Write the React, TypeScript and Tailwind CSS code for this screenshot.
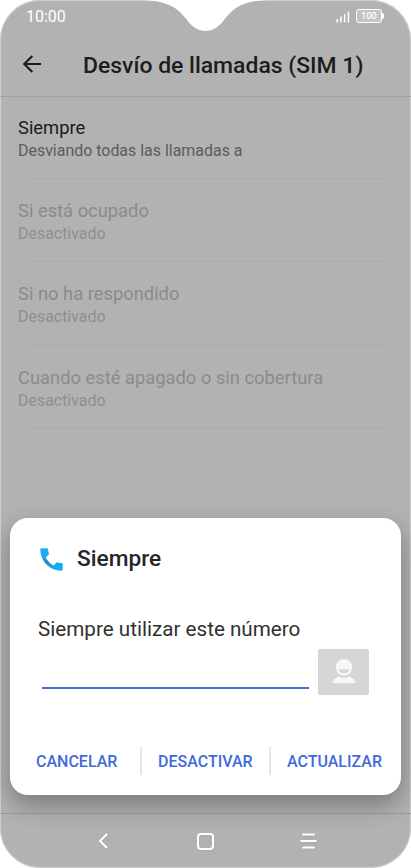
import React from 'react'

interface ForwardingOption {
  title: string
  status: string
  enabled: boolean
}

const options: ForwardingOption[] = [
  { title: 'Siempre', status: 'Desviando todas las llamadas a', enabled: true },
  { title: 'Si está ocupado', status: 'Desactivado', enabled: false },
  { title: 'Si no ha respondido', status: 'Desactivado', enabled: false },
  { title: 'Cuando esté apagado o sin cobertura', status: 'Desactivado', enabled: false },
]

const StatusBar: React.FC = () => (
  <div className="flex h-8 items-start justify-between pl-[26px] pr-[27px] text-white">
    <span className="pt-[7px] text-base leading-5">10:00</span>
    <div className="flex items-start gap-[6px] pt-[9px]">
      <svg width="14" height="14" viewBox="0 0 14 14" stroke="white" strokeWidth="1.5">
        <path d="M1.2 13.5V10M4.9 13.5V7.5M8.6 13.5V5M12.4 13.5V2.500" />
      </svg>
      <div className="flex items-center">
        <div className="flex h-[14px] w-[26px] items-center justify-center rounded-[3px] border border-white bg-[#c4c4c4] text-[9px] font-medium leading-none">
          100
        </div>
        <div className="h-[6px] w-[2px] rounded-r-sm bg-white" />
      </div>
    </div>
  </div>
)

const Header: React.FC = () => (
  <div className="flex h-[65px] items-center border-b border-[#a2a2a2] pl-[22px]">
    <svg width="20" height="18" viewBox="0 0 20 18" fill="none" stroke="#1c1c1c" strokeWidth="2.2">
      <path d="M19 9H2.4M10.3 1L2.3 9l8 8" />
    </svg>
    <h1 className="pl-[41px] pt-[3px] text-[22.95px] font-medium leading-8 text-[#1c1c1c]">Desvío de llamadas (SIM 1)</h1>
  </div>
)

const OptionRow: React.FC<{ option: ForwardingOption }> = ({ option }) => (
  <li className="h-[83.4px] pt-[18.6px]">
    <p className={`pl-[18px] text-[18.35px] leading-6 ${option.enabled ? 'text-[#1c1c1c]' : 'text-[#8b8b8b]'}`}>
      {option.title}
    </p>
    <p className={`pl-[18px] text-[15.95px] leading-[22px] ${option.enabled ? 'text-[#5c5c5c]' : 'text-[#8f8f8f]'}`}>
      {option.status}
    </p>
    <div className="ml-7 mr-[27px] mt-[16.500px] h-px bg-[#ababab]" />
  </li>
)

const PhoneIcon: React.FC = () => (
  <svg width="23" height="23" viewBox="0 0 23 23">
    <defs>
      <linearGradient id="handset" x1="0" y1="0" x2="1" y2="1">
        <stop offset="0" stopColor="#1fb2f5" />
        <stop offset="0.3" stopColor="#1ba9ec" />
        <stop offset="0.42" stopColor="#2387bd" />
        <stop offset="0.6" stopColor="#1c9cda" />
        <stop offset="0.75" stopColor="#12abf3" />
        <stop offset="1" stopColor="#12abf3" />
      </linearGradient>
    </defs>
    <path
      fill="url(#handset)"
      d="M1.4.3H6.9Q8 .3 8.1 1.4 8.2 3.4 8.9 5.4 9.1 6.1 8.5 6.8L5.7 9.6Q8.3 14.8 13.6 17.5L16.3 14.8Q16.9 14.2 17.6 14.4 19.5 15 21.6 15.1 22.7 15.2 22.7 16.2V21.5Q22.7 22.7 21.5 22.7C9.8 22.7.3 13.2.3 1.5Q.3.3 1.4.3Z"
    />
  </svg>
)

const ContactIcon: React.FC = () => (
  <svg width="24" height="26" viewBox="0 0 24 26" fill="#f7f7f7">
    <path d="M.5 24.200c.3-3.200 2.700-5.900 6.500-6.700 3 1.600 7 1.600 10 0 3.800.8 6.200 3.500 6.500 6.700z" />
    <circle cx="12" cy="8.300" r="8.300" />
    <path d="M6.200 10.200h11.600c-.5 2.700-2.900 4-5.800 4s-5.300-1.300-5.800-4z" fill="#d5d7d6" />
  </svg>
)

const Dialog: React.FC = () => (
  <div className="absolute left-[10px] top-[518px] flex h-[277px] w-[391px] flex-col rounded-[18px] bg-white shadow-[0_10px_24px_rgba(0,0,0,0.32)]">
    <div className="flex items-center gap-[14px] pl-[30px] pt-[25px]">
      <PhoneIcon />
      <h2 className="text-[22.7px] font-medium leading-8 text-[#262626]">Siempre</h2>
    </div>
    <p className="pl-[28px] pt-[40px] text-[20.65px] leading-7 text-[#303030]">Siempre utilizar este número</p>
    <div className="flex items-end pl-[32px] pt-[6px]">
      <div className="mb-[6px] h-[39px] w-[267px] border-b-2 border-[#4b70cf]" />
      <div className="ml-[9px] flex h-[46px] w-[51px] items-center justify-center rounded-[2px] bg-[#d5d7d6]">
        <ContactIcon />
      </div>
    </div>
    <div className="mt-[52px] flex h-[28px] items-center text-[16px] font-medium text-[#4169dc]">
      <button className="w-[130px] pl-[26px] pt-[2px] text-left">CANCELAR</button>
      <div className="h-[28px] w-[2px] bg-[#e6e6e6]" />
      <button className="w-[127px] pl-[16px] pt-[2px] text-left">DESACTIVAR</button>
      <div className="h-[28px] w-[2px] bg-[#e6e6e6]" />
      <button className="pl-[16px] pt-[2px] text-left">ACTUALIZAR</button>
    </div>
  </div>
)

const NavBar: React.FC = () => (
  <div className="mt-auto flex h-[55px] items-center border-t border-[#8d8d8d]/60">
    <svg width="10" height="16" viewBox="0 0 10 16" className="ml-[98px] drop-shadow-xs" fill="none" stroke="white" strokeWidth="2">
      <path d="M9 1L2 8l7 7" />
    </svg>
    <div className="ml-[89px] h-[17px] w-[17px] rounded-[4px] border-2 border-white drop-shadow-xs" />
    <svg width="17" height="16" viewBox="0 0 17 16" className="ml-[86px] drop-shadow-xs" stroke="white" strokeWidth="2" strokeLinecap="round">
      <path d="M3 1.500h11M1.200 8h14.600M3 14.500h11" />
    </svg>
  </div>
)

export default function App() {
  return (
    <div className="h-[868px] w-[411px] overflow-hidden bg-white font-['Roboto',sans-serif]">
      <div className="relative flex h-[868px] flex-col overflow-hidden rounded-[40px] bg-[#b2b2b2] shadow-[inset_0_0_0_1px_#cfcfcf]">
        <StatusBar />
        <Header />
        <ul>
          {options.map((option) => (
            <OptionRow key={option.title} option={option} />
          ))}
        </ul>
        <NavBar />
        <Dialog />
        {/* Display notch */}
        <svg width="124" height="32" viewBox="0 0 124 32" className="absolute left-[143px] top-0" fill="white">
          <path d="M0 0C20 1 30 5 38 13C46 22 51 31 62.500 31S79 22 87 13C95 5 105 1 124 0Z" />
        </svg>
      </div>
    </div>
  )
}
